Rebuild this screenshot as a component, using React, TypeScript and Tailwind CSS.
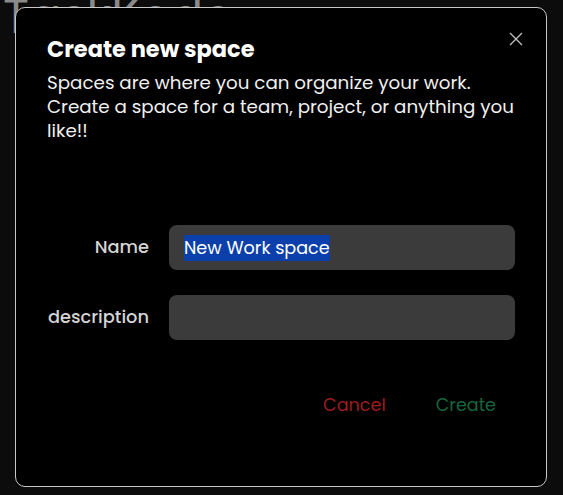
import React from 'react';

const font = { fontFamily: 'Poppins, "Open Sans", "Noto Sans", sans-serif' };

const App: React.FC = () => {
  return (
    <div className="relative h-[495px] w-full overflow-hidden bg-[#0c0c0c]" style={font}>
      {/* app logo behind the modal */}
      <div className="absolute left-[3px] top-[-7px] text-[48px] font-normal leading-none text-[#8a8a8a]">
        TaskKode
      </div>

      <div className="relative ml-[15px] mt-[7px] h-[480px] w-[532px] rounded-[10px] border border-[#c8c8c8] bg-black px-[31px] pt-[27px]">
        <button className="absolute right-[23px] top-[24px] text-[#bdbdbd]" aria-label="close">
          <svg width="14" height="14" viewBox="0 0 14 14" fill="none" stroke="currentColor" strokeWidth="1.4">
            <path d="M1 1L13 13M13 1L1 13" />
          </svg>
        </button>

        <h2 className="text-[22.5px] font-bold leading-[28px] text-white">Create new space</h2>
        <p className="mt-[8px] w-[472px] text-[18.3px] leading-[24px] text-[#f0f0f0]">
          Spaces are where you can organize your work. Create a space for a team, project, or anything you like!!
        </p>

        <div className="mt-[82px] grid grid-cols-[102px_1fr] items-center gap-x-[20px] gap-y-[25px]">
          <label className="text-right text-[17.8px] font-medium text-[#d4d4d4]">Name</label>
          <div className="flex h-[45px] items-center rounded-[8px] bg-[#3b3b3b] px-[15px]">
            <span className="bg-[#0b3fab] text-[17.6px] leading-[26px] text-white">New Work space</span>
          </div>
          <label className="text-right text-[17.8px] font-medium text-[#d4d4d4]">description</label>
          <div className="h-[45px] rounded-[8px] bg-[#3b3b3b]" />
        </div>

        <div className="mt-[53px] flex justify-end gap-[50px] pr-[19px]">
          <button className="text-[17.6px] leading-[24px] text-[#9b1d1f]">Cancel</button>
          <button className="text-[17.6px] leading-[24px] text-[#17663a]">Create</button>
        </div>
      </div>
    </div>
  );
};

export default App;
